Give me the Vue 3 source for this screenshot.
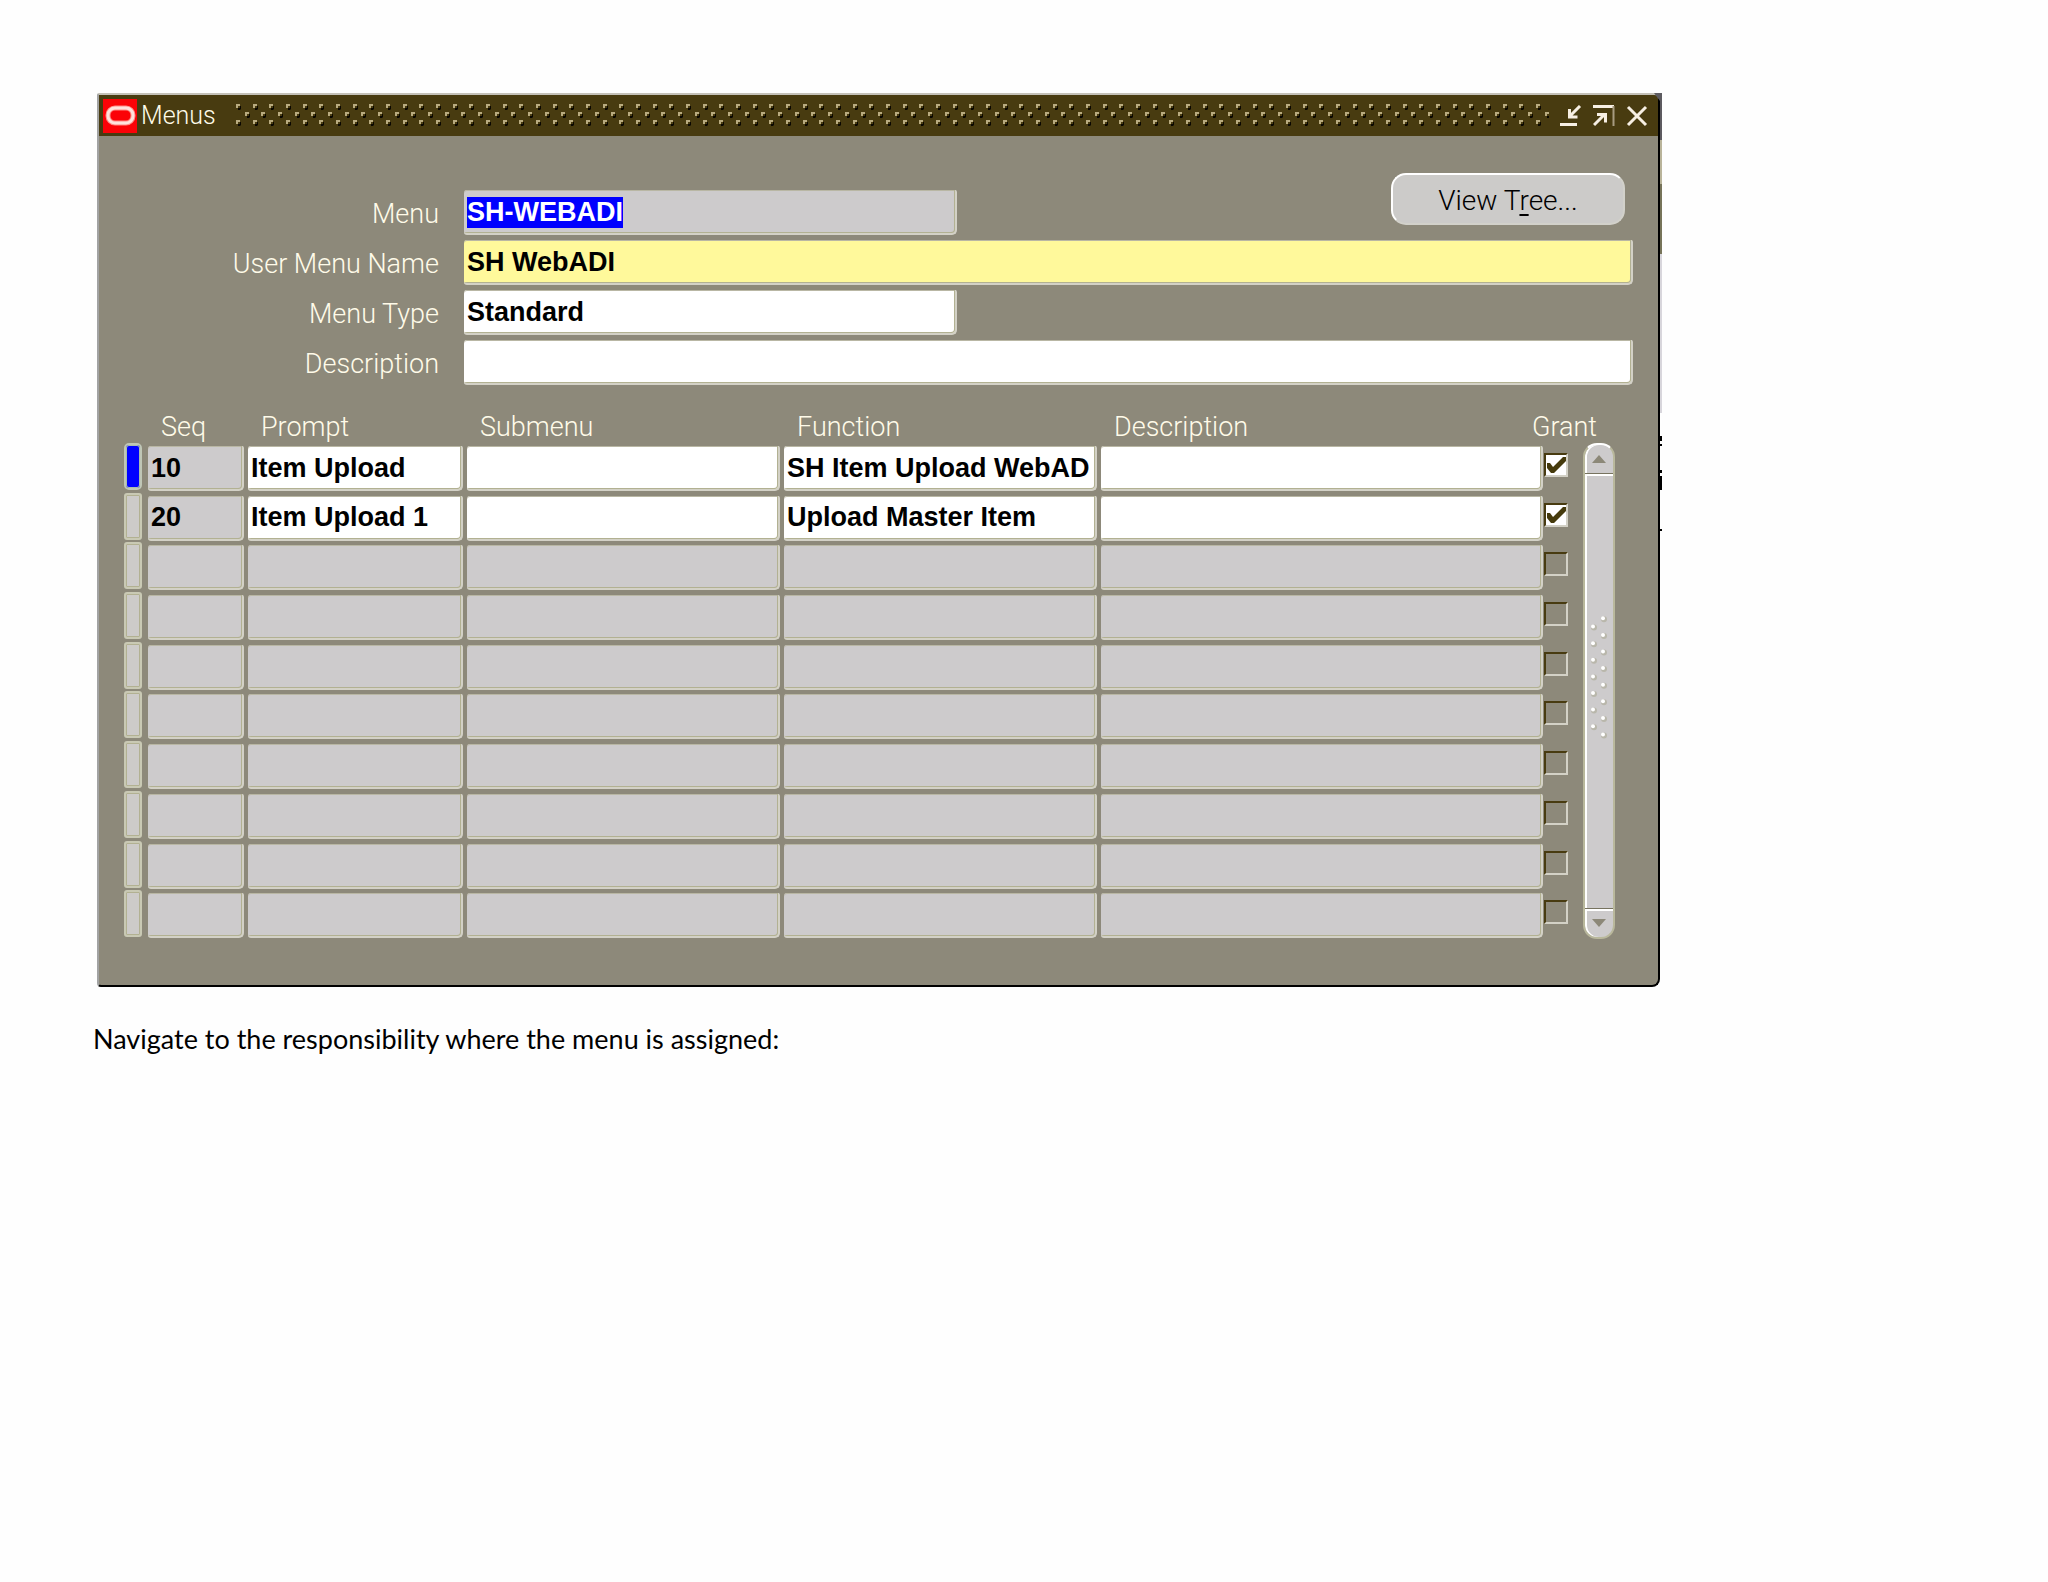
<script setup>
/**
 * App.vue — Menus form: menu header fields and its list of entries.
 */
import { onMounted, reactive, ref } from 'vue'

const ROW_COUNT = 10

const menu = reactive({
  name: 'SH-WEBADI',
  userName: 'SH WebADI',
  type: 'Standard',
  description: '',
})

const entries = [
  { seq: '10', prompt: 'Item Upload', submenu: '', func: 'SH Item Upload WebAD', description: '', grant: true },
  { seq: '20', prompt: 'Item Upload 1', submenu: '', func: 'Upload Master Item', description: '', grant: true },
]

const rows = reactive(
  Array.from({ length: ROW_COUNT }, (_, i) => entries[i] || {
    seq: '', prompt: '', submenu: '', func: '', description: '', grant: false, empty: true,
  }),
)

const columns = [
  { key: 'seq', label: 'Seq' },
  { key: 'prompt', label: 'Prompt' },
  { key: 'submenu', label: 'Submenu' },
  { key: 'func', label: 'Function' },
  { key: 'description', label: 'Description' },
]

// stud positions inside one 50px tile of the title bar grip
const studs = [[0, 0], [17, 0], [33, 0], [9, 8], [25, 8], [42, 8], [0, 16], [17, 16], [33, 16]]

const current = ref(0)
const nameInput = ref(null)

onMounted(() => {
  nameInput.value.focus({ preventScroll: true })
  nameInput.value.select()
})
</script>

<template>
  <main class="page">
    <div class="frame">
      <section class="window" aria-labelledby="window-title">
        <header class="titlebar">
          <svg class="logo" width="34" height="34" viewBox="0 0 34 34" aria-hidden="true">
            <rect width="34" height="34" fill="#fb0207" />
            <rect x="5" y="9" width="25" height="15" rx="7" fill="none" stroke="#ff8a84" stroke-width="5" />
            <rect x="5" y="9" width="25" height="15" rx="7" fill="none" stroke="#ffe2dd" stroke-width="3" />
          </svg>
          <h1 id="window-title">Menus</h1>
          <svg class="grip" height="24" aria-hidden="true">
            <defs>
              <pattern id="studs" width="50" height="24" patternUnits="userSpaceOnUse">
                <g v-for="[x, y] in studs" :key="`${x}-${y}`">
                  <path :d="`M${x + 2} ${y + 4}h2v-2h1v3l-1 1h-2z`" fill="#0a0700" />
                  <path :d="`M${x} ${y}h4v2h-2v2h-2z`" fill="#b9ab80" />
                </g>
              </pattern>
            </defs>
            <rect width="100%" height="24" fill="url(#studs)" />
          </svg>
          <div class="controls">
            <button type="button" aria-label="Minimize">
              <svg width="22" height="22" viewBox="0 0 22 22" fill="none" stroke="#f7efe3" stroke-width="3">
                <path d="M0 19.5h17M20 1L10 11M9.500 4v8h8" />
              </svg>
            </button>
            <button type="button" aria-label="Maximize">
              <svg width="22" height="22" viewBox="0 0 22 22" fill="none">
                <path d="M0 1.500h21" stroke="#f7efe3" stroke-width="3" />
                <path d="M20.500 1v20" stroke="#a79b80" stroke-width="2" />
                <path d="M1 20L12 9M4 9.500h8.500v8" stroke="#f7efe3" stroke-width="3" />
              </svg>
            </button>
            <button type="button" aria-label="Close">
              <svg width="22" height="22" viewBox="0 0 22 22" fill="none" stroke="#f7efe3" stroke-width="3">
                <path d="M2 2l18 18M20 2L2 20" />
              </svg>
            </button>
          </div>
        </header>

        <form class="body" @submit.prevent>
          <div class="fields">
            <label for="menu-name">Menu</label>
            <input id="menu-name" ref="nameInput" v-model="menu.name" class="field locked" type="text">
            <button type="button" class="view-tree">View T<u>r</u>ee...</button>

            <label for="user-menu-name">User Menu Name</label>
            <input id="user-menu-name" v-model="menu.userName" class="field wide required" type="text">

            <label for="menu-type">Menu Type</label>
            <input id="menu-type" v-model="menu.type" class="field" type="text">

            <label for="menu-description">Description</label>
            <input id="menu-description" v-model="menu.description" class="field wide" type="text">
          </div>

          <div class="entries">
            <table>
              <colgroup>
                <col class="col-marker">
                <col v-for="col in columns" :key="col.key" :class="`col-${col.key}`">
                <col class="col-grant">
              </colgroup>
              <thead>
                <tr>
                  <td></td>
                  <th v-for="col in columns" :id="`head-${col.key}`" :key="col.key" scope="col">{{ col.label }}</th>
                  <th id="head-grant" class="grant-head" scope="col">Grant</th>
                </tr>
              </thead>
              <tbody>
                <tr v-for="(row, i) in rows" :key="i">
                  <td class="marker-cell">
                    <input v-model="current" class="marker" type="radio" name="current" :value="i" :aria-label="`Record ${i + 1}`">
                  </td>
                  <td v-for="col in columns" :key="col.key" :class="`cell-${col.key}`">
                    <input
                      v-model="row[col.key]"
                      class="field"
                      :class="{ locked: row.empty || col.key === 'seq' }"
                      type="text"
                      :aria-labelledby="`head-${col.key}`"
                    >
                  </td>
                  <td class="grant-cell">
                    <span class="check">
                      <input v-model="row.grant" type="checkbox" aria-labelledby="head-grant">
                      <svg v-if="row.grant" width="20" height="20" viewBox="0 0 20 20" aria-hidden="true">
                        <path d="M1 8h3l3 4 10-10h3v4L8 18H5L1 13z" fill="#453a0c" />
                      </svg>
                    </span>
                  </td>
                </tr>
              </tbody>
            </table>

            <div class="scrollbar">
              <button type="button" class="arrow" aria-label="Scroll up">
                <svg width="14" height="8" viewBox="0 0 14 8"><path d="M7 0l7 8H0z" fill="#8c8878" /></svg>
              </button>
              <div class="thumb">
                <svg width="16" height="124" viewBox="0 0 16 124" aria-hidden="true">
                  <g v-for="n in 15" :key="n">
                    <circle :cx="n % 2 ? 13 : 3" :cy="n * 8.3 - 4" r="3" fill="#b9b7ab" />
                    <circle :cx="n % 2 ? 12 : 2" :cy="n * 8.3 - 5" r="2" fill="#fff" />
                  </g>
                </svg>
              </div>
              <button type="button" class="arrow" aria-label="Scroll down">
                <svg width="14" height="8" viewBox="0 0 14 8"><path d="M0 0h14L7 8z" fill="#8c8878" /></svg>
              </button>
            </div>
          </div>
        </form>
      </section>

      <!-- strip of the window behind -->
      <svg class="behind" width="8" height="440" viewBox="0 0 8 440" aria-hidden="true">
        <path d="M0 0h8v47H6V8z" fill="#5d5b60" />
        <path d="M6 47h2v44H6z" fill="#b9b49a" />
        <path d="M6 91h2v70H6z" fill="#77745a" />
        <path d="M6 161h2v159H6z" fill="#d8d6dc" />
        <path d="M6 343h2v5H6zM6 351h2v2H6zM6 377h2v3H6zM6 383h2v14H6zM6 436h2v2H6z" fill="#000" />
      </svg>
    </div>

    <p class="caption">Navigate to the responsibility where the menu is assigned:</p>
  </main>
</template>

<style>
body {
  margin: 0;
  background: #fefefe;
}
</style>

<style scoped>
.page {
  padding: 93px 388px 93px 97px;
  font-family: Roboto, 'Liberation Sans', Arial, sans-serif;
  font-size: 27px;
  line-height: 36px;
}

button,
input {
  font: inherit;
  margin: 0;
  box-sizing: border-box;
}

.frame {
  position: relative;
}

.window {
  border: 2px solid #000;
  border-top-color: #c4c1b8;
  border-left-color: #a2a3a3;
  border-radius: 2px 6px 8px 4px;
  background: #8d897a;
  overflow: hidden;
}

.behind {
  position: absolute;
  top: 0;
  right: -2px;
}

.titlebar {
  display: flex;
  align-items: center;
  height: 41px;
  padding: 0 10px 0 4px;
  background: #483b10;
  color: #fffbe9;
}

.logo {
  flex: none;
}

.titlebar h1 {
  margin: 0 20px 0 4px;
  font-size: 25px;
  font-weight: 300;
}

.grip {
  flex: 1;
  min-width: 0;
}

.controls {
  display: flex;
  gap: 11px;
  margin-left: 11px;
}

.controls button {
  display: flex;
  padding: 0;
  border: 0;
  background: none;
}

.body {
  padding: 37px 25px 45px;
}

/* header block */

.fields {
  display: grid;
  grid-template-columns: 315px 493px 1fr;
  grid-template-rows: 62px;
  column-gap: 25px;
  row-gap: 5px;
  align-items: end;
}

.fields label {
  grid-column: 1;
  padding-bottom: 3px;
  color: #fffbe9;
  font-weight: 300;
  text-align: right;
}

.field {
  display: block;
  width: 100%;
  height: 45px;
  padding: 4px 3px 3px;
  border: 0 solid #d3d1c6;
  border-width: 0 2px 2px 0;
  border-radius: 3px 2px 5px 3px;
  box-shadow: inset -1px -1px 0 #b2b192, inset 0 1px 0 #b9b7a4;
  background: #fff;
  color: #000;
  font-family: 'Liberation Sans', Arial, sans-serif;
  font-weight: 700;
  outline: none;
}

.field.wide {
  grid-column: 2 / -1;
}

.field.locked {
  background: #cdcbcc;
}

.field.required {
  background: #fff99b;
}

.field::selection {
  background: #0000ff;
  color: #fff;
}

.view-tree {
  align-self: start;
  justify-self: end;
  width: 234px;
  height: 52px;
  margin-right: 8px;
  padding: 3px 0 0;
  border: 2px solid #d2d1ca;
  border-top-color: #fff;
  border-left-color: #fff;
  border-radius: 15px;
  background: #cccbc9;
  color: #000;
  font-size: 28px;
  font-weight: 300;
}

.view-tree u {
  text-underline-offset: 4px;
}

/* entry grid */

.entries {
  display: flex;
  margin-top: 25px;
  padding-right: 18px;
}

table {
  flex: 1;
  width: 100%;
  min-width: 0;
  height: 530px;
  border-collapse: collapse;
  table-layout: fixed;
}

.col-marker { width: 24px; }
.col-seq { width: 100px; }
.col-prompt { width: 219px; }
.col-submenu,
.col-func { width: 317px; }
.col-grant { width: 39px; }

thead tr {
  height: 33px;
}

th {
  padding: 2px 0 0 13px;
  color: #fffbe9;
  font-weight: 300;
  line-height: 31px;
  text-align: left;
  white-space: nowrap;
}

td {
  padding: 3px 4px 0 0;
  vertical-align: top;
}

.cell-description {
  padding-right: 1px;
}

thead td {
  padding: 0;
}

.grant-head {
  padding-left: 0;
  text-indent: -12px;
}

.marker-cell {
  padding-top: 0;
}

.marker {
  appearance: none;
  display: block;
  width: 18px;
  height: 47px;
  border: 2px solid #c9c9b4;
  border-radius: 3px;
  box-shadow: inset 0 0 0 1px #b2b192;
  background: #cdcbc9;
}

.marker:checked {
  border-color: #bfc6b6;
  border-radius: 5px;
  box-shadow: inset 0 0 0 1px #a9bcae;
  background: #0000ff;
}

.grant-cell {
  padding: 10px 0 0;
}

.check {
  display: grid;
  width: 24px;
  height: 24px;
}

.check input,
.check svg {
  grid-area: 1 / 1;
}

.check input {
  appearance: none;
  width: 24px;
  height: 24px;
  border: 2px solid #d3d1c6;
  border-top-color: #483b10;
  border-left-color: #483b10;
}

.check input:checked {
  background: #fff;
}

.check svg {
  margin: 2px;
  pointer-events: none;
}

.scrollbar {
  display: flex;
  flex: none;
  flex-direction: column;
  width: 32px;
  height: 496px;
  margin-top: 33px;
  box-sizing: border-box;
  border: 2px solid #b9b89c;
  border-top-color: #fff;
  border-radius: 14px;
  background: #cdcbcc;
  box-shadow: inset 2px 0 0 #fff;
  overflow: hidden;
}

.arrow {
  display: flex;
  align-items: center;
  justify-content: center;
  height: 28px;
  padding: 0;
  border: 0;
  background: none;
}

.thumb {
  flex: 1;
  display: flex;
  align-items: center;
  justify-content: center;
  padding-bottom: 28px;
  border-top: 1px solid #77735f;
  border-bottom: 1px solid #77735f;
  box-shadow: inset 0 2px 0 #fff, 0 2px 0 #fff;
}

.caption {
  margin: 34px 0 0 -4px;
  font-family: Lato, Carlito, sans-serif;
  color: #000;
}
</style>
